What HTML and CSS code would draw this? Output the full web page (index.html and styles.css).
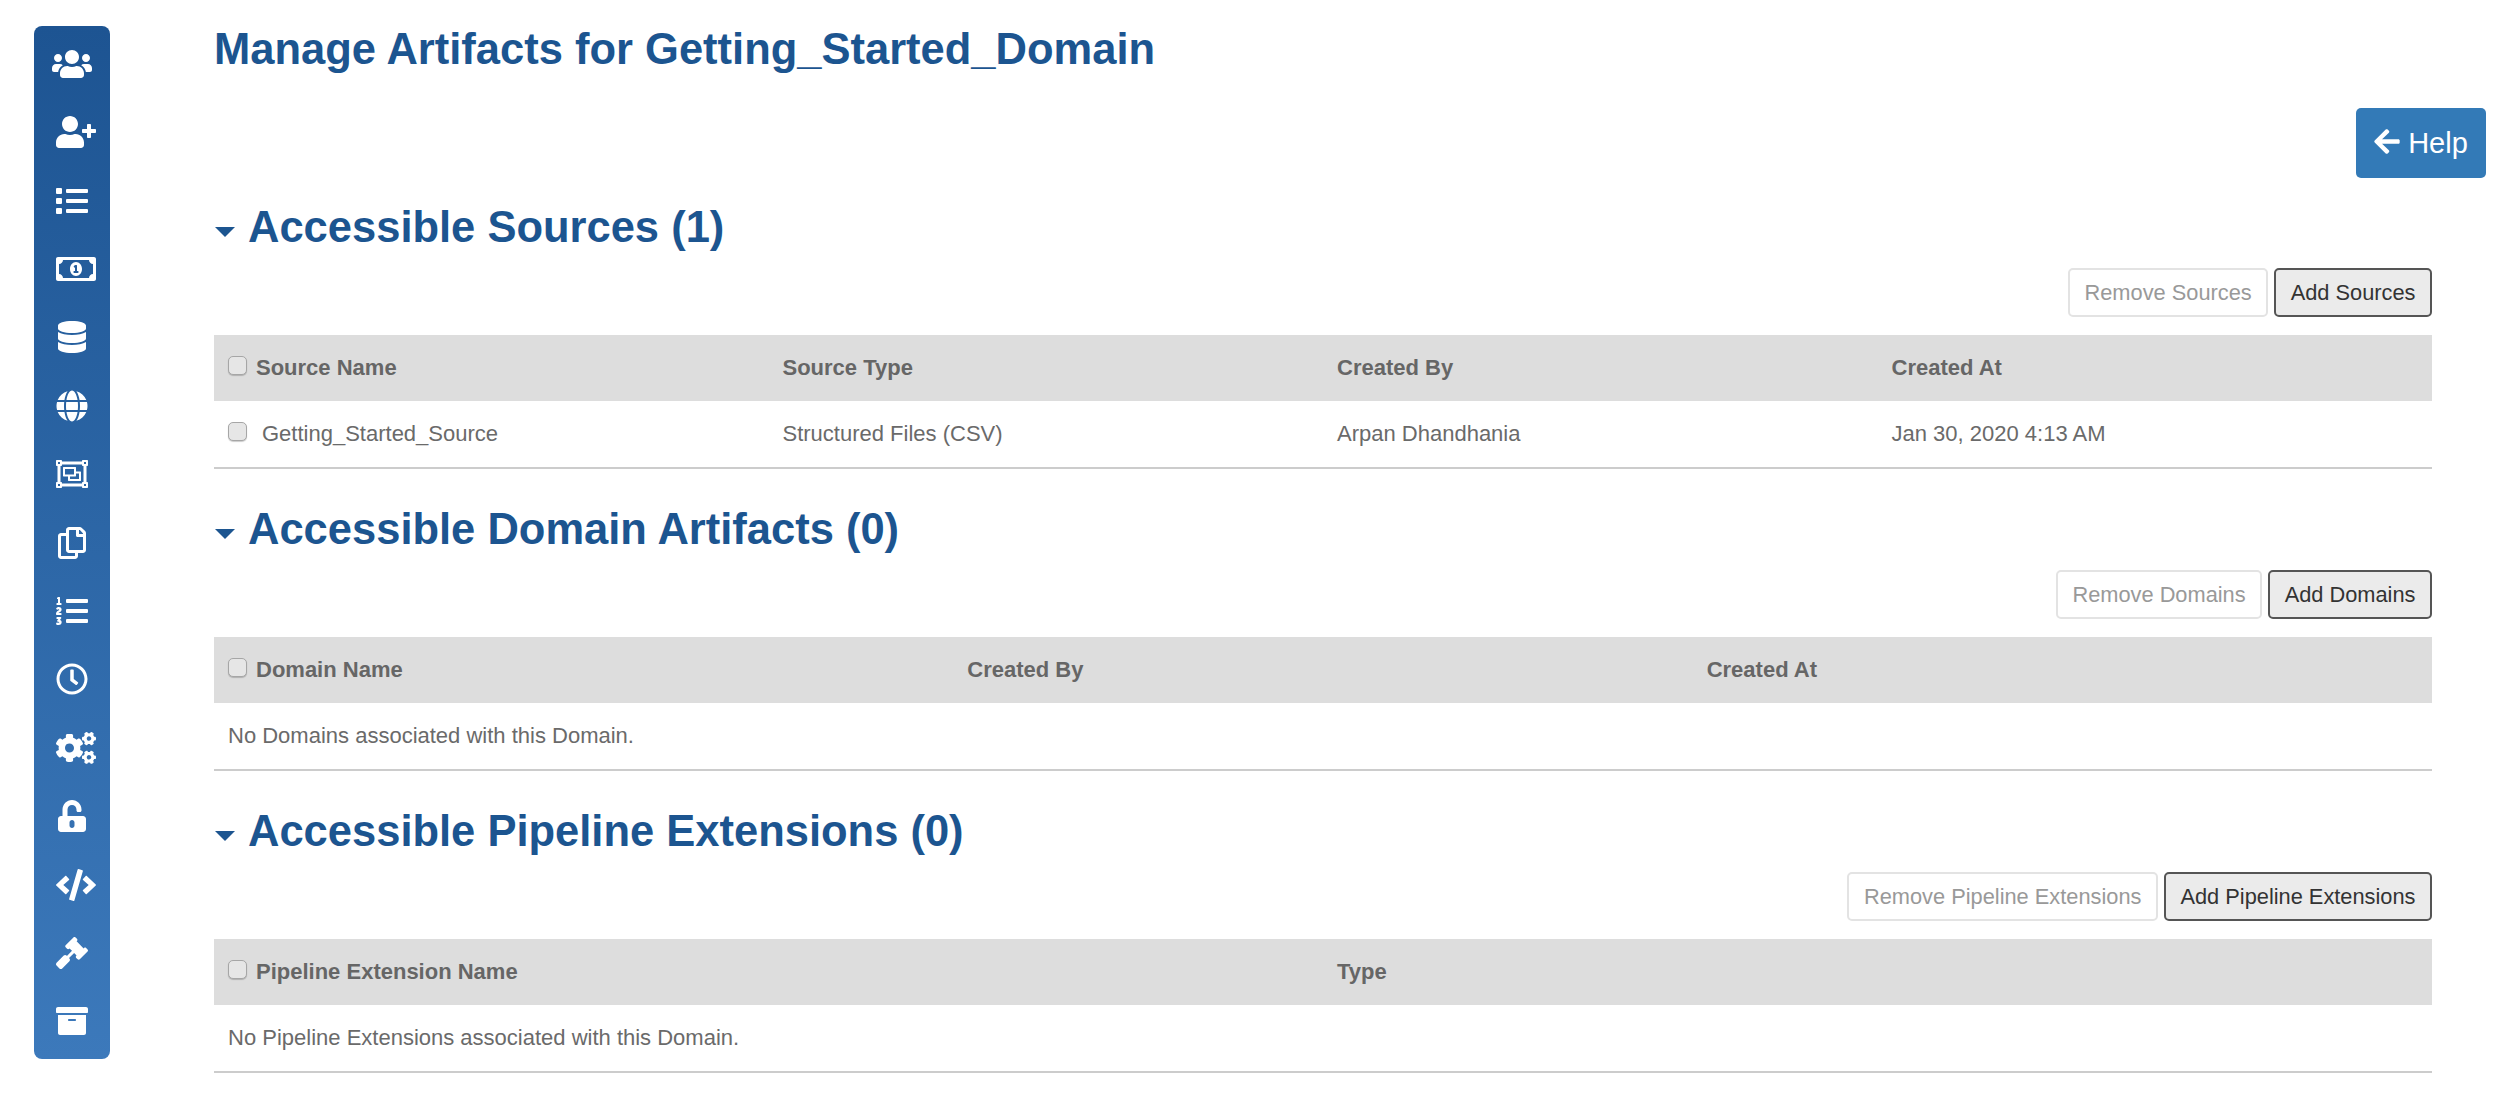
FILE: index.html
```html
<!DOCTYPE html>
<html lang="en">
<head>
<meta charset="utf-8">
<title>Manage Artifacts</title>
<link rel="stylesheet" href="styles.css">
</head>
<body>
<div class="page">
  <nav class="sidebar">
    <a class="nav-item"><svg class="icon wide-center" viewBox="0 0 640 512"><path d="M96 224c35.3 0 64-28.7 64-64s-28.7-64-64-64-64 28.7-64 64 28.7 64 64 64zm448 0c35.3 0 64-28.7 64-64s-28.7-64-64-64-64 28.7-64 64 28.7 64 64 64zm32 32h-64c-17.6 0-33.5 7.1-45.1 18.6 40.3 22.1 68.9 62 75.1 109.4h66c17.7 0 32-14.3 32-32v-32c0-35.3-28.7-64-64-64zm-256 0c61.9 0 112-50.1 112-112S381.9 32 320 32 208 82.1 208 144s50.1 112 112 112zm76.8 32h-8.3c-20.8 10-43.9 16-68.5 16s-47.6-6-68.5-16h-8.3C179.6 288 128 339.6 128 403.2V432c0 26.5 21.5 48 48 48h288c26.5 0 48-21.5 48-48v-28.8c0-63.6-51.6-115.2-115.2-115.2zm-223.7-13.4C161.5 263.1 145.6 256 128 256H64c-35.3 0-64 28.7-64 64v32c0 17.7 14.3 32 32 32h65.9c6.3-47.4 34.9-87.3 75.2-109.4z"/></svg></a>
    <a class="nav-item"><svg class="icon wide" viewBox="0 0 640 512"><path d="M624 208h-64v-64c0-8.8-7.2-16-16-16h-32c-8.8 0-16 7.2-16 16v64h-64c-8.8 0-16 7.2-16 16v32c0 8.8 7.2 16 16 16h64v64c0 8.8 7.2 16 16 16h32c8.8 0 16-7.2 16-16v-64h64c8.8 0 16-7.2 16-16v-32c0-8.8-7.2-16-16-16zm-400 48c70.7 0 128-57.3 128-128S294.7 0 224 0 96 57.3 96 128s57.3 128 128 128zm89.6 32h-16.7c-22.2 10.2-46.9 16-72.9 16s-50.6-5.8-72.9-16h-16.7C60.2 288 0 348.2 0 422.4V464c0 26.5 21.5 48 48 48h352c26.5 0 48-21.5 48-48v-41.6c0-74.2-60.2-134.4-134.4-134.4z"/></svg></a>
    <a class="nav-item"><svg class="icon" viewBox="0 0 512 512"><path d="M80 368H16a16 16 0 0 0-16 16v64a16 16 0 0 0 16 16h64a16 16 0 0 0 16-16v-64a16 16 0 0 0-16-16zm0-320H16A16 16 0 0 0 0 64v64a16 16 0 0 0 16 16h64a16 16 0 0 0 16-16V64a16 16 0 0 0-16-16zm0 160H16a16 16 0 0 0-16 16v64a16 16 0 0 0 16 16h64a16 16 0 0 0 16-16v-64a16 16 0 0 0-16-16zm416 176H176a16 16 0 0 0-16 16v32a16 16 0 0 0 16 16h320a16 16 0 0 0 16-16v-32a16 16 0 0 0-16-16zm0-320H176a16 16 0 0 0-16 16v32a16 16 0 0 0 16 16h320a16 16 0 0 0 16-16V80a16 16 0 0 0-16-16zm0 160H176a16 16 0 0 0-16 16v32a16 16 0 0 0 16 16h320a16 16 0 0 0 16-16v-32a16 16 0 0 0-16-16z"/></svg></a>
    <a class="nav-item"><svg class="icon wide" viewBox="0 0 640 512"><path d="M320 144c-53.02 0-96 50.14-96 112 0 61.85 42.98 112 96 112 53 0 96-50.13 96-112 0-61.86-42.98-112-96-112zm40 168c0 4.42-3.58 8-8 8h-64c-4.42 0-8-3.58-8-8v-16c0-4.42 3.58-8 8-8h16v-55.44l-.47.31a7.992 7.992 0 0 1-11.09-2.22l-8.88-13.31a7.992 7.992 0 0 1 2.22-11.09l15.33-10.22a23.99 23.99 0 0 1 13.31-4.03H328c4.42 0 8 3.58 8 8v88h16c4.42 0 8 3.58 8 8v16zM608 64H32C14.33 64 0 78.33 0 96v320c0 17.67 14.33 32 32 32h576c17.67 0 32-14.33 32-32V96c0-17.67-14.33-32-32-32zm-16 272c-35.35 0-64 28.65-64 64H112c0-35.35-28.65-64-64-64V176c35.35 0 64-28.65 64-64h416c0 35.35 28.65 64 64 64v160z"/></svg></a>
    <a class="nav-item"><svg class="icon" viewBox="0 0 448 512"><path d="M448 73.143v45.714C448 159.143 347.667 192 224 192S0 159.143 0 118.857V73.143C0 32.857 100.333 0 224 0s224 32.857 224 73.143zM448 176v102.857C448 319.143 347.667 352 224 352S0 319.143 0 278.857V176c48.125 33.143 136.208 48.572 224 48.572S399.874 209.143 448 176zm0 160v102.857C448 479.143 347.667 512 224 512S0 479.143 0 438.857V336c48.125 33.143 136.208 48.572 224 48.572S399.874 369.143 448 336z"/></svg></a>
    <a class="nav-item"><svg class="icon" viewBox="0 0 496 512"><path d="M336.5 160C322 70.7 287.8 8 248 8s-74 62.7-88.5 152h177zM152 256c0 22.2 1.2 43.5 3.3 64h185.3c2.1-20.5 3.3-41.8 3.3-64s-1.2-43.5-3.3-64H155.3c-2.1 20.5-3.3 41.8-3.3 64zm324.7-96c-28.6-67.9-86.5-120.4-158-141.6 24.4 33.8 41.2 84.7 50 141.6h108zM177.2 18.4C105.8 39.6 47.8 92.1 19.3 160h108c8.7-56.9 25.5-107.8 49.9-141.6zM487.4 192H372.7c2.1 21 3.3 42.5 3.3 64s-1.2 43-3.3 64h114.6c5.5-20.5 8.6-41.8 8.6-64s-3.1-43.5-8.5-64zM120 256c0-21.5 1.2-43 3.3-64H8.6C3.2 212.5 0 233.8 0 256s3.2 43.5 8.6 64h114.6c-2-21-3.2-42.5-3.2-64zm39.5 96c14.5 89.3 48.7 152 88.5 152s74-62.7 88.5-152h-177zm159.3 141.6c71.4-21.2 129.4-73.7 158-141.6h-108c-8.8 56.9-25.6 107.8-50 141.6zM19.3 352c28.6 67.9 86.5 120.4 158 141.6-24.4-33.8-41.2-84.7-50-141.6h-108z"/></svg></a>
    <a class="nav-item"><svg class="icon" viewBox="0 0 512 512"><path fill-rule="evenodd" d="M500 128c6.627 0 12-5.373 12-12V44c0-6.627-5.373-12-12-12h-72c-6.627 0-12 5.373-12 12v12H96V44c0-6.627-5.373-12-12-12H12C5.373 32 0 37.373 0 44v72c0 6.627 5.373 12 12 12h12v256H12c-6.627 0-12 5.373-12 12v72c0 6.627 5.373 12 12 12h72c6.627 0 12-5.373 12-12v-12h320v12c0 6.627 5.373 12 12 12h72c6.627 0 12-5.373 12-12v-72c0-6.627-5.373-12-12-12h-12V128h12zM448 64h32v32h-32V64zM32 64h32v32H32V64zm32 384H32v-32h32v32zm416 0h-32v-32h32v32zm-40-64h-12c-6.627 0-12 5.373-12 12v12H96v-12c0-6.627-5.373-12-12-12H72V128h12c6.627 0 12-5.373 12-12v-12h320v12c0 6.627 5.373 12 12 12h12v256zM120 144h192c4.4 0 8 3.6 8 8v64h72c4.4 0 8 3.6 8 8v136c0 4.4-3.6 8-8 8H200c-4.4 0-8-3.6-8-8v-64h-72c-4.4 0-8-3.6-8-8V152c0-4.400 3.600-8 8-8zm24 32v88h144v-88H144zm80 120v40h144v-88h-48v40c0 4.400-3.600 8-8 8h-88z"/></svg></a>
    <a class="nav-item"><svg class="icon" viewBox="0 0 448 512"><path d="M433.941 65.941l-51.882-51.882A48 48 0 0 0 348.118 0H176c-26.51 0-48 21.49-48 48v48H48c-26.51 0-48 21.49-48 48v320c0 26.51 21.49 48 48 48h224c26.51 0 48-21.49 48-48v-48h80c26.51 0 48-21.49 48-48V99.882a48 48 0 0 0-14.059-33.941zM266 464H54a6 6 0 0 1-6-6V150a6 6 0 0 1 6-6h74v224c0 26.51 21.49 48 48 48h96v42a6 6 0 0 1-6 6zm128-96H182a6 6 0 0 1-6-6V54a6 6 0 0 1 6-6h106v88c0 13.255 10.745 24 24 24h88v202a6 6 0 0 1-6 6zm6-256h-64V48h9.632c1.591 0 3.117.632 4.243 1.757l48.368 48.368a6 6 0 0 1 1.757 4.243V112z"/></svg></a>
    <a class="nav-item"><svg class="icon" viewBox="0 0 512 512"><path d="M61.77 401l17.5-20.15a19.92 19.92 0 0 0 5.07-14.19v-3.31C84.34 356 80.5 352 73 352H16a8 8 0 0 0-8 8v16a8 8 0 0 0 8 8h22.83a157.41 157.41 0 0 0-11 12.31l-5.61 7c-4 5.07-5.25 10.13-2.8 14.88l1.05 1.93c3 5.76 6.29 7.88 12.25 7.88h4.73c10.33 0 15.94 2.44 15.94 9.09 0 4.72-4.2 8.22-14.36 8.22a41.54 41.54 0 0 1-15.47-3.12c-6.49-3.88-11.74-3.5-15.6 3.12l-5.59 9.31c-3.72 6.13-3.19 11.72 2.63 15.94 7.71 4.69 20.38 9.44 37 9.44 34.16 0 48.5-22.75 48.5-44.12-.03-14.38-9.12-29.76-28.73-34.88zM496 224H176a16 16 0 0 0-16 16v32a16 16 0 0 0 16 16h320a16 16 0 0 0 16-16v-32a16 16 0 0 0-16-16zm0-160H176a16 16 0 0 0-16 16v32a16 16 0 0 0 16 16h320a16 16 0 0 0 16-16V80a16 16 0 0 0-16-16zm0 320H176a16 16 0 0 0-16 16v32a16 16 0 0 0 16 16h320a16 16 0 0 0 16-16v-32a16 16 0 0 0-16-16zM16 160h64a8 8 0 0 0 8-8v-16a8 8 0 0 0-8-8H64V40a8 8 0 0 0-8-8H32a8 8 0 0 0-7.14 4.42l-8 16A8 8 0 0 0 24 64h8v64H16a8 8 0 0 0-8 8v16a8 8 0 0 0 8 8zm-3.91 160H80a8 8 0 0 0 8-8v-16a8 8 0 0 0-8-8H41.32c3.29-10.29 48.34-18.68 48.34-56.44 0-29.06-25-39.56-44.47-39.56-21.36 0-33.8 10-40.46 18.75-4.37 5.59-3 10.84 2.8 15.37l8.58 6.88c5.61 4.56 11 2.47 16.12-2.44a13.44 13.44 0 0 1 9.46-3.84c3.33 0 9.28 1.56 9.28 8.75C51 248.19 0 257.31 0 304.59v4C0 316 5.08 320 12.09 320z"/></svg></a>
    <a class="nav-item"><svg class="icon" viewBox="0 0 512 512"><path d="M256 8C119 8 8 119 8 256s111 248 248 248 248-111 248-248S393 8 256 8zm0 448c-110.5 0-200-89.5-200-200S145.5 56 256 56s200 89.5 200 200-89.5 200-200 200zm61.8-104.4l-84.9-61.7c-3.1-2.3-4.9-5.9-4.9-9.7V116c0-6.6 5.4-12 12-12h32c6.6 0 12 5.4 12 12v141.7l66.8 48.6c5.4 3.9 6.5 11.4 2.6 16.8L334.6 349c-3.9 5.3-11.4 6.5-16.800 2.600z"/></svg></a>
    <a class="nav-item"><svg class="icon wide" viewBox="0 0 640 512"><path d="M512.1 191l-8.2 14.3c-3 5.3-9.4 7.5-15.1 5.4-11.8-4.4-22.6-10.7-32.1-18.6-4.6-3.8-5.8-10.5-2.8-15.7l8.2-14.3c-6.9-8-12.3-17.3-15.9-27.4h-16.5c-6 0-11.2-4.3-12.2-10.3-2-12-2.1-24.6 0-37.1 1-6 6.2-10.4 12.2-10.4h16.5c3.6-10.1 9-19.4 15.9-27.4l-8.2-14.3c-3-5.2-1.9-11.9 2.8-15.7 9.5-7.9 20.4-14.2 32.1-18.6 5.7-2.1 12.1.1 15.1 5.4l8.2 14.3c10.5-1.9 21.2-1.9 31.7 0L552 6.3c3-5.3 9.4-7.5 15.1-5.4 11.8 4.4 22.6 10.7 32.1 18.6 4.6 3.8 5.8 10.5 2.8 15.7l-8.2 14.3c6.9 8 12.3 17.3 15.9 27.4h16.5c6 0 11.2 4.3 12.2 10.3 2 12 2.1 24.6 0 37.1-1 6-6.2 10.4-12.2 10.4h-16.5c-3.6 10.1-9 19.4-15.9 27.4l8.2 14.3c3 5.2 1.9 11.9-2.8 15.7-9.5 7.9-20.4 14.2-32.1 18.6-5.7 2.1-12.1-.1-15.1-5.4l-8.2-14.3c-10.4 1.9-21.2 1.9-31.7 0zm-10.5-58.8c38.5 29.6 82.4-14.3 52.8-52.8-38.5-29.7-82.4 14.3-52.8 52.8zM386.3 286.1l33.7 16.8c10.1 5.8 14.5 18.1 10.5 29.1-8.9 24.2-26.4 46.4-42.6 65.8-7.4 8.9-20.2 11.1-30.3 5.3l-29.1-16.8c-16 13.7-34.6 24.6-54.9 31.7v33.6c0 11.6-8.3 21.6-19.7 23.6-24.6 4.2-50.4 4.4-75.9 0-11.5-2-20-11.9-20-23.6V418c-20.3-7.2-38.9-18-54.9-31.7L74 403c-10 5.8-22.9 3.6-30.3-5.3-16.2-19.4-33.3-41.6-42.2-65.7-4-10.9.4-23.2 10.5-29.1l33.3-16.8c-3.9-20.9-3.9-42.4 0-63.4L12 205.8c-10.1-5.8-14.6-18.1-10.5-29 8.9-24.2 26-46.4 42.2-65.8 7.4-8.9 20.2-11.1 30.3-5.3l29.1 16.8c16-13.7 34.6-24.6 54.9-31.7V57.1c0-11.5 8.2-21.5 19.6-23.5 24.6-4.2 50.5-4.4 76-.1 11.5 2 20 11.9 20 23.6v33.6c20.3 7.2 38.9 18 54.9 31.7l29.1-16.8c10-5.8 22.9-3.6 30.3 5.3 16.2 19.4 33.2 41.6 42.1 65.8 4 10.9.1 23.2-10 29.1l-33.7 16.8c3.9 21 3.9 42.5 0 63.5zm-117.6 21.1c59.2-77-28.7-164.9-105.7-105.7-59.2 77 28.7 164.9 105.7 105.7zm243.4 182.7l-8.2 14.3c-3 5.3-9.4 7.5-15.1 5.4-11.8-4.4-22.6-10.7-32.1-18.6-4.6-3.8-5.8-10.5-2.8-15.7l8.2-14.3c-6.9-8-12.3-17.3-15.9-27.4h-16.5c-6 0-11.2-4.3-12.2-10.3-2-12-2.1-24.6 0-37.1 1-6 6.2-10.4 12.2-10.4h16.5c3.6-10.1 9-19.4 15.9-27.4l-8.2-14.3c-3-5.2-1.9-11.9 2.8-15.7 9.5-7.9 20.4-14.2 32.1-18.6 5.7-2.1 12.1.1 15.1 5.4l8.2 14.3c10.5-1.9 21.2-1.9 31.7 0l8.2-14.3c3-5.3 9.4-7.5 15.1-5.4 11.8 4.4 22.6 10.7 32.1 18.6 4.6 3.8 5.8 10.5 2.8 15.7l-8.2 14.3c6.9 8 12.3 17.3 15.9 27.4h16.5c6 0 11.2 4.3 12.2 10.3 2 12 2.1 24.6 0 37.1-1 6-6.2 10.4-12.2 10.4h-16.5c-3.6 10.1-9 19.4-15.9 27.4l8.2 14.3c3 5.2 1.9 11.9-2.8 15.7-9.5 7.9-20.4 14.2-32.1 18.6-5.7 2.1-12.1-.1-15.1-5.4l-8.2-14.3c-10.4 1.9-21.2 1.9-31.7 0zM501.6 431c38.5 29.6 82.4-14.3 52.8-52.8-38.5-29.6-82.4 14.3-52.8 52.8z"/></svg></a>
    <a class="nav-item"><svg class="icon" viewBox="0 0 448 512"><path d="M400 256H152V152.9c0-39.6 31.7-72.5 71.3-72.9 40-.4 72.7 32.1 72.7 72v16c0 13.3 10.7 24 24 24h32c13.3 0 24-10.7 24-24v-16C376 68 307.5-.3 223.5 0 139.5.3 72 69.5 72 153.5V256H48c-26.5 0-48 21.5-48 48v160c0 26.5 21.5 48 48 48h352c26.5 0 48-21.5 48-48V304c0-26.5-21.5-48-48-48zM264 408c0 22.1-17.9 40-40 40s-40-17.900-40-40v-48c0-22.100 17.900-40 40-40s40 17.900 40 40v48z"/></svg></a>
    <a class="nav-item"><svg class="icon wide" viewBox="0 0 640 512"><path d="M278.9 511.5l-61-17.7c-6.4-1.8-10-8.5-8.2-14.9L346.2 8.7c1.8-6.4 8.5-10 14.9-8.2l61 17.7c6.4 1.8 10 8.5 8.2 14.9L293.8 503.3c-1.9 6.4-8.5 10.1-14.9 8.2zm-114-112.2l43.5-46.4c4.6-4.9 4.3-12.7-.8-17.2L117 256l90.6-79.7c5.1-4.5 5.5-12.3.8-17.2l-43.5-46.4c-4.5-4.8-12.1-5.1-17-.5L3.8 247.2c-5.1 4.7-5.1 12.8 0 17.5l144.1 135.1c4.9 4.6 12.5 4.4 17-.5zm327.2.6l144.1-135.1c5.1-4.7 5.1-12.8 0-17.5L492.1 112.1c-4.8-4.5-12.4-4.3-17 .5L431.6 159c-4.6 4.9-4.3 12.7.8 17.2L523 256l-90.6 79.7c-5.1 4.5-5.5 12.3-.8 17.2l43.5 46.4c4.5 4.9 12.1 5.1 17 .6z"/></svg></a>
    <a class="nav-item"><svg class="icon" viewBox="0 0 512 512"><path d="M504.971 199.362l-22.627-22.627c-9.373-9.373-24.569-9.373-33.941 0l-5.657 5.657L329.608 69.255l5.657-5.657c9.373-9.373 9.373-24.569 0-33.941L312.638 7.029c-9.373-9.373-24.569-9.373-33.941 0L154.246 131.48c-9.373 9.373-9.373 24.569 0 33.941l22.627 22.627c9.373 9.373 24.569 9.373 33.941 0l5.657-5.657 39.598 39.598-81.04 81.04-5.657-5.657c-12.497-12.497-32.758-12.497-45.255 0L9.373 412.118c-12.497 12.497-12.497 32.758 0 45.255l45.255 45.255c12.497 12.497 32.758 12.497 45.255 0l114.745-114.745c12.497-12.497 12.497-32.758 0-45.255l-5.657-5.657 81.04-81.04 39.598 39.598-5.657 5.657c-9.373 9.373-9.373 24.569 0 33.941l22.627 22.627c9.373 9.373 24.569 9.373 33.941 0l124.451-124.451c9.372-9.372 9.372-24.568 0-33.941z"/></svg></a>
    <a class="nav-item"><svg class="icon" viewBox="0 0 512 512"><path d="M32 448c0 17.7 14.3 32 32 32h384c17.7 0 32-14.3 32-32V160H32v288zm160-212c0-6.6 5.4-12 12-12h104c6.6 0 12 5.4 12 12v8c0 6.6-5.4 12-12 12H204c-6.6 0-12-5.4-12-12v-8zM480 32H32C14.3 32 0 46.3 0 64v48c0 8.8 7.2 16 16 16h480c8.8 0 16-7.2 16-16V64c0-17.7-14.3-32-32-32z"/></svg></a>
  </nav>

  <main class="content">
    <h1 class="page-title">Manage Artifacts for Getting_Started_Domain</h1>
    <div class="help-row">
      <button class="help-btn"><svg class="help-icon" viewBox="0 0 448 512"><path d="M257.5 445.1l-22.2 22.2c-9.4 9.4-24.6 9.4-33.9 0L7 273c-9.4-9.4-9.4-24.6 0-33.9L201.4 44.7c9.4-9.4 24.6-9.4 33.9 0l22.2 22.2c9.5 9.5 9.3 25-.4 34.3L136.6 216H424c13.3 0 24 10.7 24 24v32c0 13.3-10.7 24-24 24H136.6l120.5 114.8c9.8 9.3 10 24.8.4 34.3z"/></svg>Help</button>
    </div>

    <section class="section">
      <h2 class="section-title"><span class="caret"></span>Accessible Sources (1)</h2>
      <div class="actions">
        <button class="btn btn-disabled">Remove Sources</button>
        <button class="btn btn-add">Add Sources</button>
      </div>
      <table class="grid">
        <thead><tr>
          <th><span class="head-check"><input class="check" type="checkbox">Source Name</span></th>
          <th>Source Type</th><th>Created By</th><th>Created At</th>
        </tr></thead>
        <tbody><tr>
          <td><span class="row-check"><input class="check" type="checkbox">Getting_Started_Source</span></td>
          <td>Structured Files (CSV)</td><td>Arpan Dhandhania</td><td>Jan 30, 2020 4:13 AM</td>
        </tr></tbody>
      </table>
    </section>

    <section class="section">
      <h2 class="section-title"><span class="caret"></span>Accessible Domain Artifacts (0)</h2>
      <div class="actions">
        <button class="btn btn-disabled">Remove Domains</button>
        <button class="btn btn-add">Add Domains</button>
      </div>
      <table class="grid">
        <thead><tr>
          <th><span class="head-check"><input class="check" type="checkbox">Domain Name</span></th>
          <th>Created By</th><th>Created At</th>
        </tr></thead>
        <tbody><tr><td colspan="3">No Domains associated with this Domain.</td></tr></tbody>
      </table>
    </section>

    <section class="section">
      <h2 class="section-title"><span class="caret"></span>Accessible Pipeline Extensions (0)</h2>
      <div class="actions">
        <button class="btn btn-disabled">Remove Pipeline Extensions</button>
        <button class="btn btn-add">Add Pipeline Extensions</button>
      </div>
      <table class="grid">
        <thead><tr>
          <th><span class="head-check"><input class="check" type="checkbox">Pipeline Extension Name</span></th>
          <th>Type</th>
        </tr></thead>
        <tbody><tr><td colspan="2">No Pipeline Extensions associated with this Domain.</td></tr></tbody>
      </table>
    </section>
  </main>
</div>
</body>
</html>
```
FILE: styles.css
```css
* { box-sizing: border-box; }
html, body { margin: 0; padding: 0; background: #fff; }
body { font-family: "Liberation Sans", Arial, sans-serif; color: #666; }
.page { display: flex; align-items: flex-start; height: 1120px; overflow: hidden; }

.sidebar {
  flex: 0 0 76px;
  height: 1033px;
  margin: 26px 0 0 34px;
  padding: 3.5px 0 3.5px;
  display: flex;
  flex-direction: column;
  border-radius: 8px;
  background: linear-gradient(180deg, #1d5492 0%, #3c79bb 100%);
}
.nav-item { flex: 1; display: flex; align-items: center; justify-content: center; }
.icon { width: 32px; height: 32px; fill: #fff; display: block; flex: none; }
.icon.wide { width: 40px; margin-right: -8px; }
.icon.wide-center { width: 40px; }

.content { flex: 1; min-width: 0; margin: 0 72px 0 104px; padding-top: 19px; }
.page-title { margin: 0; font-size: 43.5px; line-height: 60px; font-weight: 700; color: #1c5590; }
.help-row { display: flex; justify-content: flex-end; margin: 29px -54px 19px 0; }
.help-btn {
  width: 130px; height: 70px;
  display: flex; align-items: center; justify-content: center; gap: 8px;
  border: 0; border-radius: 5px;
  background: #337ab7; color: #fff;
  font: 400 29px "Liberation Sans", Arial, sans-serif;
}
.help-icon { width: 26px; height: 29px; margin-top: -3px; fill: #fff; }

.section { margin-bottom: 30px; }
.section-title {
  margin: 0 0 11px;
  display: flex; align-items: center;
  font-size: 43.5px; line-height: 60px; font-weight: 700; color: #1c5590;
}
.caret {
  width: 0; height: 0; margin: 10px 13px 0 1px;
  border-left: 10px solid transparent; border-right: 10px solid transparent;
  border-top: 10px solid #1c5590;
}
.actions { display: flex; justify-content: flex-end; gap: 6px; margin-bottom: 18px; }
.btn {
  height: 49px; padding: 0 14.5px;
  border-radius: 5px;
  font: 400 21.8px "Liberation Sans", Arial, sans-serif;
}
.btn-disabled { background: #fff; border: 2px solid #e3e3e3; color: #999; }
.btn-add { background: #ebebeb; border: 2px solid #555; color: #333; }

.grid { width: 100%; border-collapse: collapse; table-layout: fixed; font-size: 22px; }
.grid th { height: 66px; padding: 0 14px; background: #ddd; text-align: left; font-weight: 700; color: #666; }
.grid td { height: 67px; padding: 0 14px; border-bottom: 2px solid #ccc; color: #6a6a6a; }
.head-check, .row-check { display: inline-flex; align-items: center; }
.head-check .check { margin-right: 9px; }
.row-check .check { margin-right: 15px; }
.check {
  appearance: none; -webkit-appearance: none;
  width: 19px; height: 19px; margin: -5px 0 0 0; flex: none;
  border: 1.5px solid #a6a6a6; border-radius: 5px;
  background: #e6e6e6;
  box-shadow: 0 1px 1px rgba(0,0,0,.2);
}
```
